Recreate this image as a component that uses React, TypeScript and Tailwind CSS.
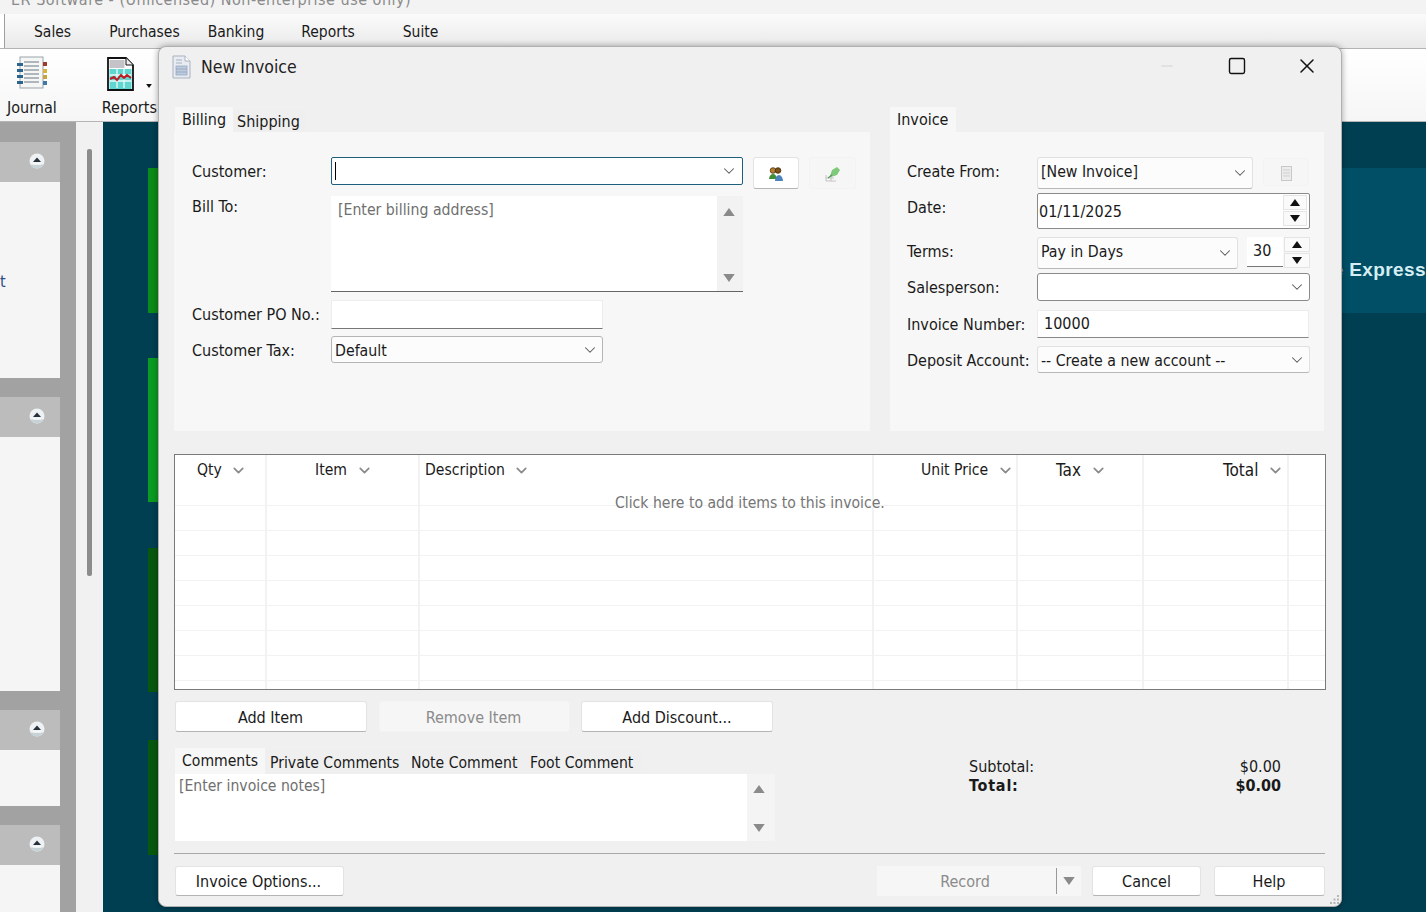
import { ChevronDown, Minus, Square, X } from "lucide-react";
import type { ReactNode } from "react";

const COLS = ["w-[92px]", "w-[153px]", "w-[454px]", "w-[144px]", "w-[126px]", "w-[145px]", "flex-1"];
const ROWS = [0, 1, 2, 3, 4, 5, 6, 7];

function Chev({ className = "text-[#555]" }: { className?: string }) {
  return <ChevronDown size={18} strokeWidth={1.4} className={`shrink-0 ${className}`} />;
}

function HeadChev() {
  return <ChevronDown size={17} strokeWidth={2.4} className="shrink-0 text-[#8a8a8a]" />;
}

function Tri({ down, color = "#111", w = 10, h = 7 }: { down?: boolean; color?: string; w?: number; h?: number }) {
  return (
    <svg width={w} height={h} viewBox="0 0 10 7" className="block">
      <path d={down ? "M0 0H10L5 7Z" : "M5 0L10 7H0Z"} fill={color} />
    </svg>
  );
}

function CollapseDot() {
  return (
    <svg width="18" height="18" viewBox="0 0 18 18">
      <circle cx="9" cy="9" r="7.5" fill="#eef2f4" />
      <path d="M2.5 12.5a7.5 7.5 0 0 0 13 0Z" fill="#c6d2d6" />
      <path d="M9 5.500l4 4.500H5Z" fill="#27313a" />
      <path d="M5 12h8" stroke="#fff" strokeWidth="1" />
    </svg>
  );
}

function JournalIcon() {
  return (
    <svg width="32" height="34" viewBox="0 0 32 34">
      <rect x="4" y="1" width="23" height="31" fill="#f5f6f6" stroke="#9aa3a8" />
      <path d="M8 6h15M8 10h15M8 14h15M8 18h15M8 22h15M8 26h15" stroke="#6d7780" strokeWidth="1" />
      <path d="M1 7h6v3H1zM1 13h6v3H1zM1 19h6v3H1zM1 25h6v3H1z" fill="#2a648f" />
      <rect x="27" y="6" width="4" height="4" fill="#9c3b2c" />
      <rect x="27" y="13" width="4" height="4" fill="#d9b23a" />
      <rect x="27" y="19" width="4" height="4" fill="#c9a43a" />
      <rect x="27" y="25" width="4" height="4" fill="#3f79a8" />
    </svg>
  );
}

function ReportsIcon() {
  return (
    <svg width="27" height="34" viewBox="0 0 27 34">
      <path d="M1 1h18l7 7v25H1Z" fill="#fff" stroke="#111" strokeWidth="1.8" />
      <path d="M19 1v7h7" fill="#eee" stroke="#111" strokeWidth="1" />
      <rect x="2.500" y="3" width="15" height="8" fill="#c4c4c8" />
      <rect x="2.500" y="12" width="22" height="20" fill="#5fd6d0" />
      <path d="M3 18h21M3 24h21M10 12v19M17 12v19" stroke="#e8fbfa" strokeWidth="1.3" />
      <path d="M3 22l4-2 3 3 4-5 3 3 3-3 4 3" fill="none" stroke="#c01a22" strokeWidth="2" />
    </svg>
  );
}

function DocIcon() {
  return (
    <svg width="19" height="24" viewBox="0 0 19 24">
      <path d="M1 1h12l5 5v17H1Z" fill="#e8ecf2" stroke="#a9b2bf" />
      <path d="M13 1v5h5" fill="#fff" stroke="#a9b2bf" />
      <rect x="4" y="11" width="11" height="9" fill="#bccbe0" stroke="#8fa1ba" strokeWidth="0.7" />
      <path d="M4 5h6M4 8h6M4 14h11M4 17h11" stroke="#94a3b8" strokeWidth="0.8" />
    </svg>
  );
}

function PeopleIcon() {
  return (
    <svg width="16" height="15" viewBox="0 0 16 15">
      <circle cx="5" cy="3.500" r="2.800" fill="#b87f30" stroke="#4a300c" strokeWidth="0.8" />
      <circle cx="10" cy="3.500" r="2.800" fill="#7f5218" stroke="#3a2408" strokeWidth="0.8" />
      <path d="M1 12c0-3 2-5 4-5s4 2 4 5Z" fill="#3f8f38" />
      <path d="M7 14c0-3 2-6 4-6s4 3 4 6Z" fill="#4c84bf" />
    </svg>
  );
}

function PinIcon() {
  return (
    <svg width="18" height="16" viewBox="0 0 18 16">
      <path d="M2 15h10M2 12h8M2 9v6M7 9v6" stroke="#b9b9b9" strokeWidth="0.8" />
      <path d="M6 10l2-6 5-3 3 3-3 5-6 2Z" fill="#7fc97a" />
      <path d="M4 12l4-3" stroke="#5a9a55" strokeWidth="1.2" />
    </svg>
  );
}

function SmallDoc() {
  return (
    <svg width="11" height="15" viewBox="0 0 11 15">
      <rect x="0.500" y="0.500" width="10" height="14" fill="#ececec" stroke="#c8c8c8" />
      <path d="M2 4h7M2 7h7M2 10h7" stroke="#cfcfcf" />
    </svg>
  );
}

function Grip() {
  return (
    <svg width="12" height="12" viewBox="0 0 12 12">
      <path d="M9 2h2v2H9zM5.500 5.500h2v2h-2zM9 5.500h2v2H9zM2 9h2v2H2zM5.500 9h2v2h-2zM9 9h2v2H9z" fill="#b5b5b5" />
    </svg>
  );
}

function Label({ children, w }: { children: ReactNode; w: string }) {
  return <div className={`${w} h-[28px] pt-[2px] shrink-0 flex items-center whitespace-nowrap`}>{children}</div>;
}

function Btn({ children, className = "", disabled }: { children: ReactNode; className?: string; disabled?: boolean }) {
  return (
    <button
      type="button"
      className={`flex items-center justify-center pt-[2px] rounded-[3px] border ${
        disabled
          ? "bg-[#f6f6f6] border-[#f3f3f3] text-[#8b8b8b]"
          : "bg-white border-[#e3e3e3] border-b-[#b4b4b4] text-[#1a1a1a]"
      } ${className}`}
    >
      {children}
    </button>
  );
}

function Combo({ value, h, className = "", textClass = "" }: { value?: string; h: string; className?: string; textClass?: string }) {
  return (
    <div className={`${h} ${className} flex items-center justify-between pl-[3px] pr-[3px] rounded-[3px] bg-[#fcfcfc] border border-[#e1e1e1] border-b-[#b8b8b8]`}>
      <span className={`whitespace-nowrap text-[15.75px] ${textClass}`}>{value}</span>
      <Chev />
    </div>
  );
}

function Spinner({ className = "" }: { className?: string }) {
  return (
    <div className={`flex flex-col gap-[1px] w-[24px] ${className}`}>
      <div className="h-[15px] flex items-center justify-center bg-[#fafafa] border border-[#e4e4e4]">
        <Tri />
      </div>
      <div className="h-[15px] flex items-center justify-center bg-[#fafafa] border border-[#e4e4e4]">
        <Tri down />
      </div>
    </div>
  );
}

function TitleBar() {
  return (
    <div className="h-[40px] shrink-0 flex items-center pl-[13px]">
      <DocIcon />
      <span className="ml-[10px] text-[17.5px] text-[#222]">New Invoice</span>
      <div className="ml-auto -mt-[2px] flex items-center text-[#111]">
        <Minus size={18} strokeWidth={1} className="text-[#c8c8c8] mr-[51px]" />
        <Square size={20} strokeWidth={1.7} className="mr-[48px]" />
        <X size={24} strokeWidth={1.5} className="mr-[22px]" />
      </div>
    </div>
  );
}

function BillingPanel() {
  return (
    <div className="w-[696px]">
      <div className="h-[25px] flex items-end">
        <div className="ml-[1px] h-[25px] w-[58px] bg-[#f7f7f7] flex items-center justify-center">Billing</div>
        <div className="h-[22px] w-[72px] bg-[#efefef] pl-[4px] pt-[2px] flex items-center">Shipping</div>
      </div>
      <div className="h-[299px] bg-[#f7f7f7] pl-[18px] pt-[25px]">
        <div className="h-[28px] flex">
          <Label w="w-[139px]">Customer:</Label>
          <div className="w-[412px] h-[28px] bg-white border border-[#1d5f7c] rounded-[2px] flex items-center justify-between pl-[3px] pr-[4px]">
            <div className="w-[1px] h-[18px] bg-black" />
            <Chev />
          </div>
          <Btn className="w-[46px] h-[32px] ml-[10px]">
            <PeopleIcon />
          </Btn>
          <Btn disabled className="w-[47px] h-[32px] ml-[10px]">
            <PinIcon />
          </Btn>
        </div>
        <div className="flex mt-[11px]">
          <div className="w-[139px] h-[22px] leading-[22px]">Bill To:</div>
          <div className="w-[412px] h-[96px] bg-white border-b border-[#666] flex">
            <div className="flex-1 pl-[7px] pt-[4px] text-[#6f6f6f] text-[15.7px]">[Enter billing address]</div>
            <div className="w-[26px] bg-[#f2f2f2] flex flex-col items-center justify-between pt-[12px] pb-[9px] pr-[2px]">
              <Tri color="#8a8a8a" w={12} h={8} />
              <Tri down color="#8a8a8a" w={12} h={8} />
            </div>
          </div>
        </div>
        <div className="flex mt-[8px]">
          <Label w="w-[139px]">Customer PO No.:</Label>
          <div className="w-[272px] h-[29px] bg-white border border-[#ededed] border-b-[#777]" />
        </div>
        <div className="flex mt-[7px]">
          <Label w="w-[139px]">Customer Tax:</Label>
          <Combo value="Default" h="h-[27px]" className="w-[272px] !border-[#b5b5b5]" textClass="pt-[2px]" />
        </div>
      </div>
    </div>
  );
}

function InvoicePanel() {
  const lw = "w-[130px]";
  return (
    <div className="w-[434px]">
      <div className="h-[25px]">
        <div className="h-[25px] w-[66px] bg-[#f7f7f7] pl-[7px] flex items-center">Invoice</div>
      </div>
      <div className="h-[299px] bg-[#f7f7f7] pl-[17px] pt-[25px] flex flex-col">
        <div className="flex h-[32px]">
          <Label w={lw}>Create From:</Label>
          <Combo value="[New Invoice]" h="h-[32px]" className="w-[216px]" textClass="pb-[2px]" />
          <Btn disabled className="w-[46px] h-[28px] ml-[10px] mt-[1px]">
            <SmallDoc />
          </Btn>
        </div>
        <div className="flex h-[36px] mt-[4px]">
          <Label w={lw}>Date:</Label>
          <div className="w-[273px] h-[36px] bg-white border border-[#8a8a8a] rounded-[2px] flex items-center justify-between pl-[1px] pr-[2px]">
            <span className="pt-[1px]">01/11/2025</span>
            <Spinner className="-mt-[1px]" />
          </div>
        </div>
        <div className="flex h-[32px] mt-[8px]">
          <Label w={lw}>Terms:</Label>
          <Combo value="Pay in Days" h="h-[32px]" className="w-[201px]" textClass="pb-[2px]" />
          <div className="ml-[9px] w-[36px] h-[30px] bg-white border-b border-[#777] pl-[6px] leading-[28px]">30</div>
          <Spinner className="ml-[1px] w-[26px]" />
        </div>
        <div className="flex h-[28px] mt-[4px]">
          <Label w={lw}>Salesperson:</Label>
          <Combo h="h-[28px]" className="w-[273px] !border-[#8a8a8a] !bg-white" />
        </div>
        <div className="flex h-[28px] mt-[9px]">
          <Label w={lw}>Invoice Number:</Label>
          <div className="w-[272px] h-[28px] bg-white border border-[#ececec] border-b-[#888] pl-[6px] flex items-center">10000</div>
        </div>
        <div className="flex h-[27px] mt-[8px]">
          <Label w={lw}>Deposit Account:</Label>
          <Combo value="-- Create a new account --" h="h-[27px]" className="w-[273px]" textClass="pt-[2px]" />
        </div>
      </div>
    </div>
  );
}

function ItemsTable() {
  const headers: { label: string; cls: string }[] = [
    { label: "Qty", cls: "pl-[22px] gap-[8px]" },
    { label: "Item", cls: "pl-[48px] gap-[9px]" },
    { label: "Description", cls: "pl-[5px] gap-[8px]" },
    { label: "Unit Price", cls: "pl-[47px] gap-[9px]" },
    { label: "Tax", cls: "pl-[38px] gap-[9px] text-[17px]" },
    { label: "Total", cls: "pl-[79px] gap-[9px] text-[17px]" },
  ];
  return (
    <div className="relative ml-[15px] mt-[23px] w-[1152px] h-[236px] shrink-0 bg-white border border-[#7a7a7a] overflow-hidden text-[15.6px]">
      <div className="flex h-[51px] border-b border-[#f2f2f2]">
        {COLS.map((c, i) => (
          <div key={c} className={`${c} ${i < 6 ? "border-r-2 border-[#f2f2f2]" : ""} h-full`}>
            {headers[i] && (
              <div className={`flex items-center h-[28px] pt-[2px] ${headers[i].cls}`}>
                <span className="whitespace-nowrap">{headers[i].label}</span>
                <HeadChev />
              </div>
            )}
          </div>
        ))}
      </div>
      {ROWS.map((r) => (
        <div key={r} className="flex h-[25px] border-b border-[#f2f2f2]">
          {COLS.map((c, i) => (
            <div key={c} className={`${c} ${i < 6 ? "border-r-2 border-[#f2f2f2]" : ""} h-full`} />
          ))}
        </div>
      ))}
      <div className="absolute left-[440px] top-[38px] text-[#757575] whitespace-nowrap">Click here to add items to this invoice.</div>
    </div>
  );
}

function CommentTabs() {
  return (
    <div className="ml-[17px] w-[600px]">
      <div className="h-[26px] flex items-end text-[15.6px]">
        <div className="h-[26px] w-[90px] bg-[#f7f7f7] pl-[7px] flex items-center pb-[1px]">Comments</div>
        <div className="h-[24px] w-[140px] bg-[#efefef] pl-[5px] pt-[2px] flex items-center">Private Comments</div>
        <div className="h-[24px] w-[119px] bg-[#efefef] pl-[6px] pt-[2px] flex items-center">Note Comment</div>
        <div className="h-[24px] w-[117px] bg-[#efefef] pl-[6px] pt-[2px] flex items-center">Foot Comment</div>
      </div>
      <div className="h-[67px] flex bg-[#f4f4f4]">
        <div className="w-[572px] bg-white pl-[4px] text-[#6f6f6f] text-[15.6px] leading-[24px]">[Enter invoice notes]</div>
        <div className="w-[24px] flex flex-col items-center justify-between pt-[11px] pb-[9px]">
          <Tri color="#8a8a8a" w={12} h={8} />
          <Tri down color="#8a8a8a" w={12} h={8} />
        </div>
      </div>
    </div>
  );
}

function Dialog() {
  return (
    <div className="absolute left-[158px] top-[46px] w-[1184px] h-[861px] bg-[#f0f0f0] rounded-[8px] border border-[#b0b0b0] shadow-[0_0_6px_rgba(0,0,0,0.35)] flex flex-col overflow-hidden">
      <TitleBar />
      <div className="mt-[20px] ml-[15px] flex gap-[20px]">
        <BillingPanel />
        <InvoicePanel />
      </div>
      <ItemsTable />
      <div className="mt-[11px] ml-[16px] flex h-[31px] shrink-0">
        <Btn className="w-[192px] h-[31px] pr-[1px]">Add Item</Btn>
        <Btn disabled className="w-[191px] h-[31px] ml-[12px] pr-[2px]">Remove Item</Btn>
        <Btn className="w-[192px] h-[31px] ml-[11px]">Add Discount...</Btn>
      </div>
      <div className="mt-[16px] flex shrink-0 h-[93px] -ml-[1px]">
        <CommentTabs />
        <div className="ml-[194px] mt-[9px] w-[312px] leading-[19px]">
          <div className="flex justify-between">
            <span>Subtotal:</span>
            <span>$0.00</span>
          </div>
          <div className="flex justify-between font-bold">
            <span className="tracking-[0.8px]">Total:</span>
            <span>$0.00</span>
          </div>
        </div>
      </div>
      <div className="mt-[12px] ml-[15px] w-[1151px] h-[1px] bg-[#a8a8a8] shrink-0" />
      <div className="mt-[12px] ml-[16px] w-[1150px] flex h-[30px] shrink-0">
        <Btn className="w-[169px] h-[30px] pr-[2px]">Invoice Options...</Btn>
        <div className="ml-auto flex h-[30px] bg-[#f6f6f6] w-[204px] items-center text-[#8b8b8b]">
          <div className="w-[180px] text-center border-r border-[#999] h-[26px] leading-[28px] pr-[3px]">Record</div>
          <div className="flex-1 flex justify-center">
            <Tri down color="#8a8a8a" w={14} h={8} />
          </div>
        </div>
        <Btn className="w-[109px] h-[30px] ml-[11px]">Cancel</Btn>
        <Btn className="w-[111px] h-[30px] ml-[13px] pr-[1px]">Help</Btn>
      </div>
      <div className="absolute right-[1px] bottom-[1px]">
        <Grip />
      </div>
    </div>
  );
}

function Menu() {
  const items: [string, string][] = [
    ["Sales", "ml-[29px]"],
    ["Purchases", "ml-[38px]"],
    ["Banking", "ml-[28px]"],
    ["Reports", "ml-[37px]"],
    ["Suite", "ml-[48px]"],
  ];
  return (
    <div className="h-[35px] shrink-0 flex items-center bg-gradient-to-b from-[#fbfbfb] to-[#e9e9e9] border-b border-[#b3b3b3] text-[15.5px]">
      <div className="w-[5px] h-full border-r border-[#9f9f9f] bg-white" />
      {items.map(([t, m]) => (
        <span key={t} className={`${m} pt-[1px] whitespace-nowrap`}>{t}</span>
      ))}
    </div>
  );
}

function Toolbar() {
  return (
    <div className="h-[73px] shrink-0 flex bg-gradient-to-b from-white to-[#f6f6f6] border-b border-[#b5b5b5]">
      <div className="ml-[7px] flex flex-col items-center pt-[7px]">
        <JournalIcon />
        <span className="mt-[8px]">Journal</span>
      </div>
      <div className="ml-[45px] flex flex-col pt-[8px] relative">
        <div className="ml-[5px]">
          <ReportsIcon />
        </div>
        <span className="mt-[7px]">Reports</span>
        <div className="absolute left-[43px] top-[35px]">
          <Tri down w={8} h={4} />
        </div>
      </div>
    </div>
  );
}

function Sidebar() {
  const panels = [
    { mt: "mt-[20px]", body: "h-[196px]", text: true },
    { mt: "mt-[19px]", body: "h-[254px]", text: false },
    { mt: "mt-[19px]", body: "h-[56px]", text: false },
    { mt: "mt-[19px]", body: "h-[60px]", text: false },
  ];
  return (
    <div className="w-[76px] shrink-0 h-full bg-[#a2a2a2] overflow-hidden">
      {panels.map((p) => (
        <div key={p.body} className={`${p.mt} w-[60px]`}>
          <div className="h-[40px] bg-[#bcbcbc] flex items-center justify-end pr-[14px] pb-[2px]">
            <CollapseDot />
          </div>
          <div className={`${p.body} bg-[#f5f5f5] ${p.text ? "pt-[90px]" : ""}`}>
            {p.text && <span className="block leading-[20px] text-[#2b4a8c]">t</span>}
          </div>
        </div>
      ))}
    </div>
  );
}

function Workspace() {
  const greens = [
    { mt: "mt-[46px]", h: "h-[145px]", bg: "bg-[#0a8a18]" },
    { mt: "mt-[45px]", h: "h-[144px]", bg: "bg-[#0b9a22]" },
    { mt: "mt-[46px]", h: "h-[144px]", bg: "bg-[#07580f]" },
    { mt: "mt-[48px]", h: "h-[115px]", bg: "bg-[#07580f]" },
  ];
  return (
    <div className="flex-1 min-w-0 h-full bg-[#003f52] flex overflow-hidden">
      <div className="ml-[45px] w-[13px]">
        {greens.map((g) => (
          <div key={g.mt + g.h} className={`${g.mt} ${g.h} ${g.bg}`} />
        ))}
      </div>
      <div className="ml-auto w-[92px] mt-[46px] h-[145px] bg-[#004f66] flex items-start justify-end overflow-hidden pt-[91px]">
        <span className="font-['Liberation_Sans'] [font-stretch:normal] font-bold text-[19px] tracking-[0.4px] leading-[22px] text-[#d6eef3] whitespace-nowrap">e Express</span>
      </div>
    </div>
  );
}

export default function App() {
  return (
    <div className="relative w-[1426px] h-[912px] overflow-hidden bg-[#f0f0f0] text-[16px] leading-[20px] text-[#1a1a1a] font-['DejaVu_Sans_Condensed','DejaVu_Sans',sans-serif] [font-stretch:condensed]">
      <div className="flex flex-col h-full">
        <div className="h-[14px] shrink-0 overflow-hidden bg-[#f3f3f3] flex items-end pl-[11px] text-[#8a8a8a] whitespace-nowrap tracking-[0.5px]">
          <span className="mb-[4px]">ER Software - (Unlicensed) Non-enterprise use only)</span>
        </div>
        <Menu />
        <Toolbar />
        <div className="flex flex-1 min-h-0">
          <Sidebar />
          <div className="w-[27px] shrink-0 h-full bg-[#f1f1f1] pl-[11px] pt-[27px]">
            <div className="w-[5px] h-[427px] bg-[#8c8c8c] rounded-[2px]" />
          </div>
          <Workspace />
        </div>
      </div>
      <Dialog />
    </div>
  );
}
